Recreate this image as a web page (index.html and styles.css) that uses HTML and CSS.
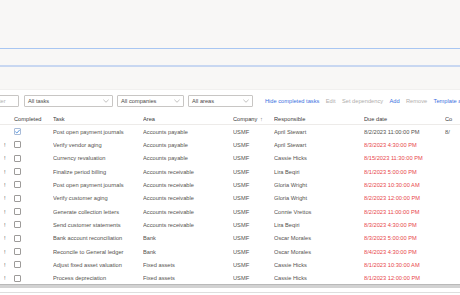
FILE: index.html
```html
<!DOCTYPE html>
<html lang="en">
<head>
<meta charset="utf-8">
<title>Tasks</title>
<link rel="stylesheet" href="styles.css">
</head>
<body>
<div class="top">
  <div class="line line-a"></div>
  <div class="line line-b"></div>
</div>
<div class="toolbar">
  <div class="box box-filter"><span class="placeholder">Filter</span></div>
  <div class="box box-tasks"><span>All tasks</span><svg class="chev" viewBox="0 0 8 5"><path d="M0.5 0.8 L4 4.2 L7.5 0.8" fill="none" stroke="#8a8886" stroke-width="0.7"/></svg></div>
  <div class="box box-companies"><span>All companies</span><svg class="chev" viewBox="0 0 8 5"><path d="M0.5 0.8 L4 4.2 L7.5 0.8" fill="none" stroke="#8a8886" stroke-width="0.7"/></svg></div>
  <div class="box box-areas"><span>All areas</span><svg class="chev" viewBox="0 0 8 5"><path d="M0.5 0.8 L4 4.2 L7.5 0.8" fill="none" stroke="#8a8886" stroke-width="0.7"/></svg></div>
  <div class="actions">
    <span class="link">Hide completed tasks</span>
    <span class="link disabled">Edit</span>
    <span class="link disabled">Set dependency</span>
    <span class="link">Add</span>
    <span class="link disabled">Remove</span>
    <span class="link">Template a</span>
  </div>
</div>
<div class="grid">
  <div class="row head">
    <div class="c c-ex"></div>
    <div class="c c-chk">Completed</div>
    <div class="c">Task</div>
    <div class="c">Area</div>
    <div class="c c-comp">Company <span class="sort">↑</span></div>
    <div class="c">Responsible</div>
    <div class="c">Due date</div>
    <div class="c c-last">Co</div>
  </div>
  <div class="row">
    <div class="c c-ex"></div>
    <div class="c c-chk"><span class="cb checked"><svg viewBox="0 0 7 7"><path d="M1.3 3.6 L2.8 5 L5.8 1.8" fill="none" stroke="#2b78d6" stroke-width="0.8"/></svg></span></div>
    <div class="c">Post open payment journals</div>
    <div class="c">Accounts payable</div>
    <div class="c">USMF</div>
    <div class="c">April Stewart</div>
    <div class="c">8/2/2023 11:00:00 PM</div>
    <div class="c c-last">8/</div>
  </div>
  <div class="row">
    <div class="c c-ex">!</div>
    <div class="c c-chk"><span class="cb"></span></div>
    <div class="c">Verify vendor aging</div>
    <div class="c">Accounts payable</div>
    <div class="c">USMF</div>
    <div class="c">April Stewart</div>
    <div class="c late">8/3/2023 4:30:00 PM</div>
    <div class="c c-last"></div>
  </div>
  <div class="row">
    <div class="c c-ex">!</div>
    <div class="c c-chk"><span class="cb"></span></div>
    <div class="c">Currency revaluation</div>
    <div class="c">Accounts payable</div>
    <div class="c">USMF</div>
    <div class="c">Cassie Hicks</div>
    <div class="c late">8/15/2023 11:30:00 PM</div>
    <div class="c c-last"></div>
  </div>
  <div class="row">
    <div class="c c-ex">!</div>
    <div class="c c-chk"><span class="cb"></span></div>
    <div class="c">Finalize period billing</div>
    <div class="c">Accounts receivable</div>
    <div class="c">USMF</div>
    <div class="c">Lira Beqiri</div>
    <div class="c late">8/1/2023 5:00:00 PM</div>
    <div class="c c-last"></div>
  </div>
  <div class="row">
    <div class="c c-ex">!</div>
    <div class="c c-chk"><span class="cb"></span></div>
    <div class="c">Post open payment journals</div>
    <div class="c">Accounts receivable</div>
    <div class="c">USMF</div>
    <div class="c">Gloria Wright</div>
    <div class="c late">8/2/2023 10:30:00 AM</div>
    <div class="c c-last"></div>
  </div>
  <div class="row">
    <div class="c c-ex">!</div>
    <div class="c c-chk"><span class="cb"></span></div>
    <div class="c">Verify customer aging</div>
    <div class="c">Accounts receivable</div>
    <div class="c">USMF</div>
    <div class="c">Gloria Wright</div>
    <div class="c late">8/2/2023 12:00:00 PM</div>
    <div class="c c-last"></div>
  </div>
  <div class="row">
    <div class="c c-ex">!</div>
    <div class="c c-chk"><span class="cb"></span></div>
    <div class="c">Generate collection letters</div>
    <div class="c">Accounts receivable</div>
    <div class="c">USMF</div>
    <div class="c">Connie Vrettos</div>
    <div class="c late">8/2/2023 11:00:00 PM</div>
    <div class="c c-last"></div>
  </div>
  <div class="row">
    <div class="c c-ex">!</div>
    <div class="c c-chk"><span class="cb"></span></div>
    <div class="c">Send customer statements</div>
    <div class="c">Accounts receivable</div>
    <div class="c">USMF</div>
    <div class="c">Lira Beqiri</div>
    <div class="c late">8/3/2023 4:30:00 PM</div>
    <div class="c c-last"></div>
  </div>
  <div class="row">
    <div class="c c-ex">!</div>
    <div class="c c-chk"><span class="cb"></span></div>
    <div class="c">Bank account reconciliation</div>
    <div class="c">Bank</div>
    <div class="c">USMF</div>
    <div class="c">Oscar Morales</div>
    <div class="c late">8/3/2023 5:00:00 PM</div>
    <div class="c c-last"></div>
  </div>
  <div class="row">
    <div class="c c-ex">!</div>
    <div class="c c-chk"><span class="cb"></span></div>
    <div class="c">Reconcile to General ledger</div>
    <div class="c">Bank</div>
    <div class="c">USMF</div>
    <div class="c">Oscar Morales</div>
    <div class="c late">8/4/2023 4:30:00 PM</div>
    <div class="c c-last"></div>
  </div>
  <div class="row">
    <div class="c c-ex">!</div>
    <div class="c c-chk"><span class="cb"></span></div>
    <div class="c">Adjust fixed asset valuation</div>
    <div class="c">Fixed assets</div>
    <div class="c">USMF</div>
    <div class="c">Cassie Hicks</div>
    <div class="c late">8/1/2023 10:30:00 AM</div>
    <div class="c c-last"></div>
  </div>
  <div class="row">
    <div class="c c-ex">!</div>
    <div class="c c-chk"><span class="cb"></span></div>
    <div class="c">Process depreciation</div>
    <div class="c">Fixed assets</div>
    <div class="c">USMF</div>
    <div class="c">Cassie Hicks</div>
    <div class="c late">8/1/2023 12:00:00 PM</div>
    <div class="c c-last"></div>
  </div>
</div>
<div class="hscroll"></div>
<div class="footer-line"></div>
</body>
</html>
```

FILE: styles.css
```css
* { box-sizing: border-box; }
html, body {
  margin: 0;
  padding: 0;
  width: 460px;
  height: 295px;
  overflow: hidden;
  background: #ffffff;
  font-family: "Liberation Sans", Arial, sans-serif;
  font-size: 5.7px;
  color: #55534f;
}
.top {
  height: 90px;
  background: #f8f7f6;
  display: flex;
  flex-direction: column;
  padding-top: 48px;
  border-bottom: 1px solid #f1f0ef;
}
.line-a { height: 1px; background: #a8c6f2; }
.line-b { height: 2px; background: #c8d7f1; margin-top: 16px; }

.toolbar {
  display: flex;
  align-items: center;
  height: 12px;
  margin-top: 5px;
  white-space: nowrap;
}
.box {
  height: 12px;
  border: 1px solid #c8c6c4;
  border-radius: 1px;
  display: flex;
  align-items: center;
  justify-content: space-between;
  padding: 0 3px 0 3px;
  color: #4a4846;
  flex: none;
}
.box-filter { width: 30px; margin-left: -11px; }
.placeholder { color: #b3b1af; }
.box-tasks { width: 89px; margin-left: 5px; }
.box-companies { width: 67px; margin-left: 4px; }
.box-areas { width: 65px; margin-left: 4px; }
.chev { width: 6px; height: 4px; }
.actions {
  display: flex;
  gap: 6.4px;
  margin-left: 12px;
}
.link { color: #3a6fe0; }
.link.disabled { color: #b0aeac; }

.grid {
  margin-top: 5px;
  display: flex;
  flex-direction: column;
}
.row {
  display: grid;
  grid-template-columns: 13px 40px 90px 90px 41px 90px 81px 8px;
  height: 13.333px;
  align-items: center;
  white-space: nowrap;
}
.row.head {
  height: 13px;
  padding-top: 1px;
  border-bottom: 1px solid #edebe9;
  color: #3b3a39;
}
.c { overflow: hidden; }
.c-last { text-overflow: clip; }
.c-ex { padding-left: 4px; color: #605e5c; }
.c-chk { padding-left: 1px; display: flex; align-items: center; }
.cb {
  width: 7px;
  height: 7px;
  border: 1px solid #9d9b99;
  border-radius: 1px;
  display: block;
  background: #fff;
}
.cb.checked { border-color: #a9bcd8; position: relative; }
.cb svg { position: absolute; left: -1px; top: -1px; width: 7px; height: 7px; }
.sort { color: #8a8886; margin-left: 1px; }
.late { color: #e8464b; }

.hscroll {
  height: 4px;
  border-top: 1px solid #b9b9b9;
  background: #d2d2d2;
  margin-top: -1px;
}
.footer-line {
  height: 1px;
  background: #dedede;
  margin-top: 4px;
}
```
